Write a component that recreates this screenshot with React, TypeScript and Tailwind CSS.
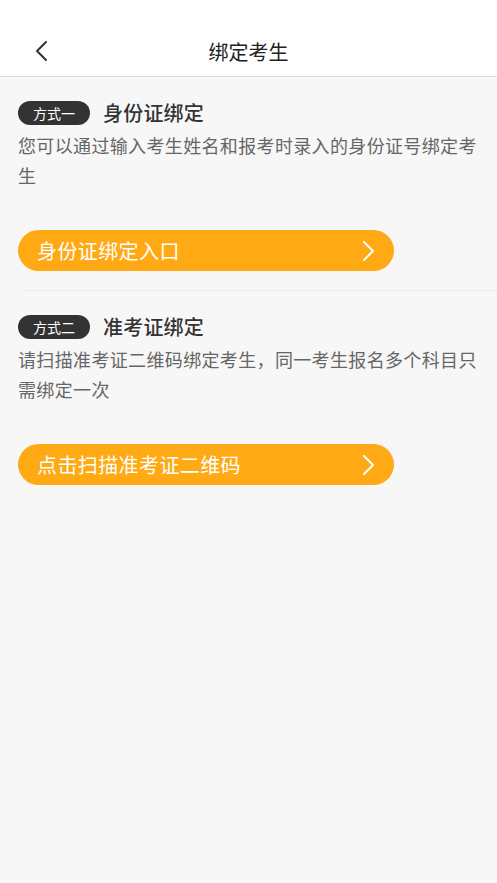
import { useState } from "react";

type Method = {
  tag: string;
  title: string;
  desc: string;
  action: string;
};

const methods: Method[] = [
  {
    tag: "方式一",
    title: "身份证绑定",
    desc: "您可以通过输入考生姓名和报考时录入的身份证号绑定考生",
    action: "身份证绑定入口",
  },
  {
    tag: "方式二",
    title: "准考证绑定",
    desc: "请扫描准考证二维码绑定考生，同一考生报名多个科目只需绑定一次",
    action: "点击扫描准考证二维码",
  },
];

function Chevron({ className }: { className?: string }) {
  return (
    <svg viewBox="0 0 14 22" className={className} fill="none">
      <path d="M2 2l9 9-9 9" stroke="currentColor" strokeWidth="2" strokeLinecap="round" strokeLinejoin="round" />
    </svg>
  );
}

function MethodBlock({ m, last }: { m: Method; last: boolean }) {
  return (
    <div className="flex flex-col">
      <div className="pt-6 pl-[18px] pr-[16px] pb-[19px]">
        {/* titre */}
        <div className="flex items-center h-6">
          <span className="h-6 w-[72px] rounded-full bg-[#333333] text-white text-[14px] flex items-center justify-center leading-none">
            {m.tag}
          </span>
          <span className="ml-[13px] text-[20px] font-medium text-[#333333] leading-none tracking-[0.2px]">{m.title}</span>
        </div>
        <p className="mt-[5px] text-[18px] leading-[30px] text-[#666666] tracking-[0.35px]">{m.desc}</p>
        <button className="mt-10 h-[41px] w-[376px] rounded-full bg-[#ffa914] flex items-center justify-between pl-[19px] pr-[18px] text-white">
          <span className="text-[20px] leading-none tracking-[0.4px]">{m.action}</span>
          <Chevron className="w-[14px] h-[22px]" />
        </button>
      </div>
      {!last && <div className="ml-6 h-px bg-[#ebebeb]" />}
    </div>
  );
}

export default function App() {
  const [list] = useState(methods);
  return (
    <div
      className="w-[497px] h-[883px] bg-[#f7f7f7] flex flex-col"
      style={{ fontFamily: '"Noto Sans CJK SC", "Noto Sans", sans-serif' }}
    >
      {/* Header */}
      <div className="bg-white h-[77px] border-b border-[#dddddd] flex flex-col">
        <div className="h-[28px]" />
        <div className="relative flex-1 flex items-center justify-center">
          <Chevron className="absolute left-[34px] top-[12px] w-[14px] h-[22px] text-[#333333] rotate-180" />
          <h1 className="text-[20px] text-[#222222] leading-none">绑定考生</h1>
        </div>
      </div>
      {list.map((m, i) => (
        <MethodBlock key={m.tag} m={m} last={i === list.length - 1} />
      ))}
    </div>
  );
}
